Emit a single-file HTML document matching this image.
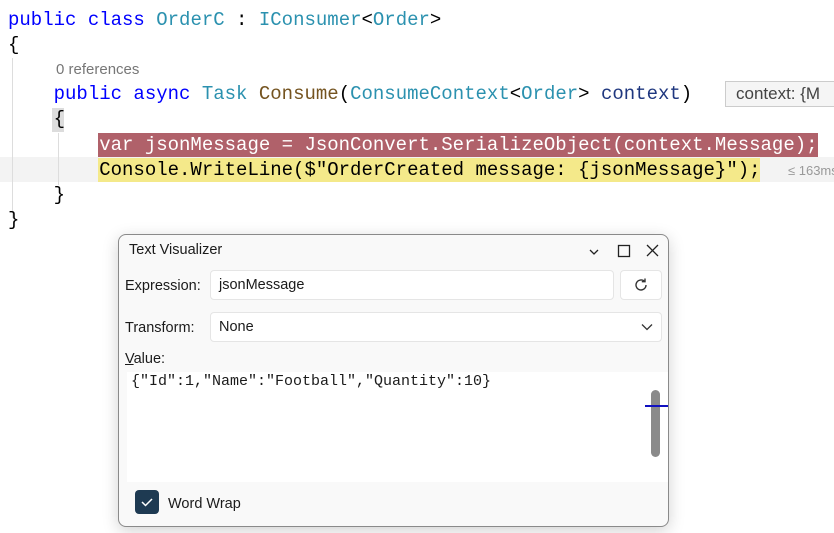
<!DOCTYPE html>
<html><head><style>
body{margin:0;width:834px;height:533px;background:#fff;position:relative;overflow:hidden;font-family:"Liberation Sans",sans-serif}
.c{position:absolute;left:8px;font-family:"Liberation Mono",monospace;font-size:19px;white-space:pre;color:#000;line-height:24px}
.k{color:#0000ff}.t{color:#2b91af}.m{color:#74531f}.p{color:#1f377f}
.ab{position:absolute;white-space:nowrap}
.dlg{position:absolute;left:118px;top:234px;width:549px;height:291px;border:1px solid #8a8a8a;border-radius:8px;background:#f9f9f9;box-shadow:0 4px 16px rgba(0,0,0,.18);font-family:"Liberation Sans",sans-serif;font-size:14.5px;color:#1b1b1b;overflow:hidden}
.box{position:absolute;background:#fff;border:1px solid #e5e5e5;border-radius:4px}
</style></head><body>
<div class="ab" style="left:0;top:157px;width:834px;height:25px;background:#f3f3f3"></div>
<div class="ab" style="left:12px;top:58px;width:1px;height:160px;background:#ddd"></div>
<div class="ab" style="left:58px;top:133px;width:1px;height:52px;background:#ddd"></div>
<div class="ab" style="left:52px;top:108px;width:12px;height:24px;background:#dcdcdc"></div>
<div class="ab" style="left:98px;top:133px;width:720px;height:24px;background:#b0616a"></div>
<div class="ab" style="left:98px;top:158px;width:662px;height:24px;background:#f4e98a"></div>
<div class="c" style="top:8px"><span class="k">public class</span> <span class="t">OrderC</span> : <span class="t">IConsumer</span>&lt;<span class="t">Order</span>&gt;</div>
<div class="c" style="top:33px">{</div>
<div class="ab" style="left:56px;top:61px;font-size:15px;color:#777">0 references</div>
<div class="c" style="top:82px">    <span class="k">public async</span> <span class="t">Task</span> <span class="m">Consume</span>(<span class="t">ConsumeContext</span>&lt;<span class="t">Order</span>&gt; <span class="p">context</span>)</div>
<div class="ab" style="left:725px;top:81px;width:120px;height:24px;border:1px solid #ccc;background:#f5f5f5;font-size:17px;color:#444;line-height:24px;padding-left:10px">context: {M</div>
<div class="c" style="top:107px">    {</div>
<div class="c" style="top:133px;color:#fff">        var jsonMessage = JsonConvert.SerializeObject(context.Message);</div>
<div class="c" style="top:158px">        Console.WriteLine($"OrderCreated message: {jsonMessage}");</div>
<div class="ab" style="left:788px;top:163px;font-size:13px;color:#999">≤ 163ms</div>
<div class="c" style="top:183px">    }</div>
<div class="c" style="top:208px">}</div>

<div class="dlg">
 <div class="ab" style="left:10px;top:7px">Text Visualizer</div>
 <svg class="ab" style="left:468px;top:8px" width="80" height="18" fill="none" stroke="#222" stroke-width="1.3">
  <path d="M3 7l4 4 4-4"/><rect x="31.5" y="2.5" width="11" height="11"/><path d="M60 2l11 11M71 2L60 13"/>
 </svg>
 <div class="ab" style="left:6px;top:43px">Expression:</div>
 <div class="box" style="left:91px;top:35px;width:402px;height:28px"><span class="ab" style="left:8px;top:6px">jsonMessage</span></div>
 <div class="box" style="left:501px;top:35px;width:40px;height:28px">
  <svg class="ab" style="left:12px;top:6px" width="16" height="16" fill="none" stroke="#333" stroke-width="1.4"><path d="M13 8a5 5 0 1 1-1.5-3.6"/><path d="M12 1.5v3.2H8.8"/></svg></div>
 <div class="ab" style="left:6px;top:85px">Transform:</div>
 <div class="box" style="left:91px;top:77px;width:450px;height:28px"><span class="ab" style="left:8px;top:6px">None</span>
  <svg class="ab" style="left:430px;top:10px" width="12" height="8" fill="none" stroke="#333" stroke-width="1.3"><path d="M1 1.5l5 5 5-5"/></svg></div>
 <div class="ab" style="left:6px;top:116px"><u>V</u>alue:</div>
 <div class="ab" style="left:8px;top:137px;width:541px;height:110px;background:#fff"></div>
 <div class="ab" style="left:12px;top:138px;font-family:'Liberation Mono',monospace;font-size:15px">{"Id":1,"Name":"Football","Quantity":10}</div>
 <div class="ab" style="left:532px;top:155px;width:9px;height:67px;border-radius:5px;background:#8a8a8a"></div>
 <div class="ab" style="left:526px;top:170px;width:23px;height:2px;background:#1010c0"></div>
 <div class="ab" style="left:16px;top:255px;width:24px;height:24px;border-radius:4px;background:#1e3a52">
  <svg width="24" height="24" fill="none" stroke="#fff" stroke-width="1.5"><path d="M7 12l3.5 3.5L17 9"/></svg></div>
 <div class="ab" style="left:49px;top:261px">Word Wrap</div>
</div>
</body></html>
